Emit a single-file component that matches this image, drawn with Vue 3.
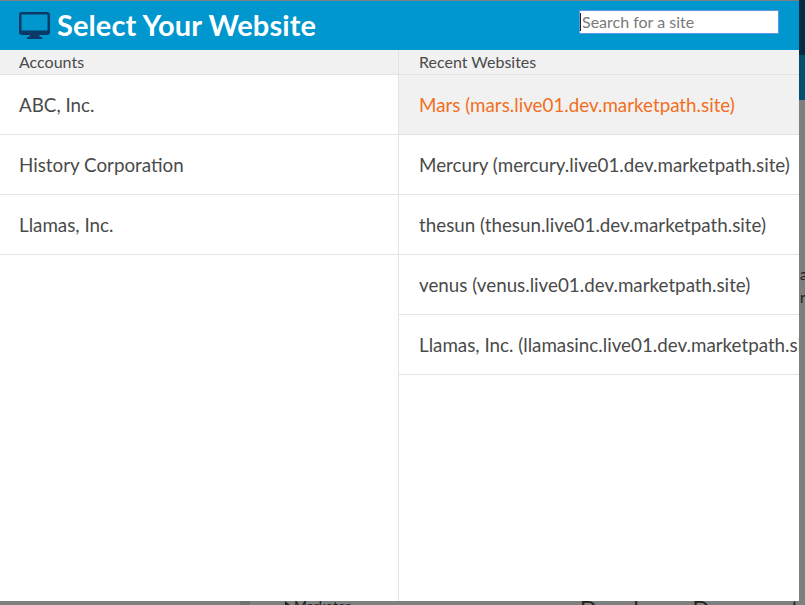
<template>
  <div class="page">
    <!-- dimmed page behind the dialog -->
    <div class="backdrop">
      <div class="strip-navy"></div>
      <div class="strip-teal"></div>
      <span class="peek peek-a">a</span>
      <span class="peek peek-r">r</span>
      <div class="side-edge"></div>
      <span class="marketer"><i class="caret"></i>Marketer</span>
      <span class="docs">Developer Documentation</span>
    </div>

    <div class="modal">
      <header class="modal-head">
        <svg class="monitor" viewBox="0 0 31 27" width="31" height="27">
          <path
            fill="#0b3a66"
            fill-rule="evenodd"
            d="M3 0h25a3 3 0 0 1 3 3v17a3 3 0 0 1-3 3H20l1 2h2v2H8v-2h2l1-2H3a3 3 0 0 1-3-3V3a3 3 0 0 1 3-3zM3 2.500a.5.5 0 0 0-.5.5v15.500h26V3a.5.5 0 0 0-.5-.5z"
          />
        </svg>
        <h1>Select Your Website</h1>
        <div class="search-wrap">
          <input class="search" type="text" placeholder="Search for a site" />
          <i class="text-cursor"></i>
        </div>
      </header>

      <div class="columns">
        <section class="col col-accounts">
          <div class="col-title">Accounts</div>
          <div v-for="account in accounts" :key="account" class="row">{{ account }}</div>
        </section>
        <section class="col col-recent">
          <div class="col-title">Recent Websites</div>
          <div
            v-for="(site, index) in sites"
            :key="site"
            class="row"
            :class="{ active: index === 0 }"
          >{{ site }}</div>
        </section>
      </div>
    </div>
  </div>
</template>

<script setup>
const accounts = ['ABC, Inc.', 'History Corporation', 'Llamas, Inc.']

const sites = [
  'Mars (mars.live01.dev.marketpath.site)',
  'Mercury (mercury.live01.dev.marketpath.site)',
  'thesun (thesun.live01.dev.marketpath.site)',
  'venus (venus.live01.dev.marketpath.site)',
  'Llamas, Inc. (llamasinc.live01.dev.marketpath.site)'
]
</script>

<style>
html,
body {
  margin: 0;
  overflow: hidden;
}
</style>

<style scoped>
.page {
  position: relative;
  width: 805px;
  height: 605px;
  overflow: hidden;
  background: #7f7f7f;
  font-family: Lato, "Open Sans", sans-serif;
  color: #4a4a4a;
}

.backdrop {
  position: absolute;
  inset: 0;
}

.strip-navy {
  position: absolute;
  left: 799px;
  top: 0;
  width: 6px;
  height: 55px;
  background: #012a45;
}

.strip-teal {
  position: absolute;
  left: 799px;
  top: 55px;
  width: 6px;
  height: 45px;
  background: #00506f;
}

.side-edge {
  position: absolute;
  left: 240px;
  top: 601px;
  width: 10px;
  height: 4px;
  background: #707070;
}

.peek,
.marketer,
.docs {
  position: absolute;
  color: #222;
  white-space: nowrap;
}

.peek {
  left: 800px;
  font-size: 15px;
}

.peek-a {
  top: 265px;
}

.peek-r {
  top: 288px;
}

.marketer {
  left: 285px;
  top: 597px;
  font-size: 14px;
}

.caret {
  display: inline-block;
  border-left: 6px solid #222;
  border-top: 5px solid transparent;
  border-bottom: 5px solid transparent;
  margin-right: 3px;
}

.docs {
  left: 580px;
  top: 594px;
  font-size: 22px;
  letter-spacing: 0.7px;
}

.modal {
  position: relative;
  width: 799px;
  height: 600px;
  margin-top: 1px;
  background: #fff;
  display: flex;
  flex-direction: column;
  overflow: hidden;
}

.modal-head {
  height: 49px;
  flex: none;
  background: #0096ce;
  display: flex;
  align-items: center;
  padding: 0 20px 0 19px;
}

.monitor {
  flex: none;
  margin-right: 7px;
  margin-top: -1px;
}

h1 {
  margin: 0;
  margin-top: -2px;
  color: #fff;
  font-size: 29px;
  font-weight: 700;
  line-height: 49px;
  letter-spacing: 0.1px;
}

.search-wrap {
  position: relative;
  margin-left: auto;
  margin-top: -4px;
  margin-bottom: 4px;
  width: 200px;
  height: 24px;
}

.search {
  display: block;
  width: 100%;
  height: 100%;
  box-sizing: border-box;
  border: 1px solid #5f95e6;
  padding: 0 2px;
  background: #fff;
  font: 16px Lato, "Open Sans", sans-serif;
  color: #4a4a4a;
  outline: none;
}

.search::placeholder {
  color: #7a7a7a;
  opacity: 1;
}

.text-cursor {
  position: absolute;
  left: 1px;
  top: 3px;
  width: 1px;
  height: 18px;
  background: #222;
}

.columns {
  flex: 1;
  display: flex;
  min-height: 0;
}

.col {
  min-width: 0;
  overflow: hidden;
}

.col-accounts {
  width: 398px;
  flex: none;
  border-right: 1px solid #e3e3e3;
}

.col-recent {
  flex: 1;
}

.col-title {
  height: 24px;
  line-height: 24px;
  padding-left: 19px;
  background: #f1f1f1;
  border-bottom: 1px solid #e3e3e3;
  font-size: 16px;
  white-space: nowrap;
}

.col-recent .col-title {
  padding-left: 20px;
}

.row {
  height: 59px;
  line-height: 59px;
  padding-left: 19px;
  border-bottom: 1px solid #e3e3e3;
  font-size: 18.8px;
  white-space: nowrap;
}

.col-recent .row {
  padding-left: 20px;
}

.row.active {
  background: #f1f1f1;
  color: #f26f21;
}
</style>
